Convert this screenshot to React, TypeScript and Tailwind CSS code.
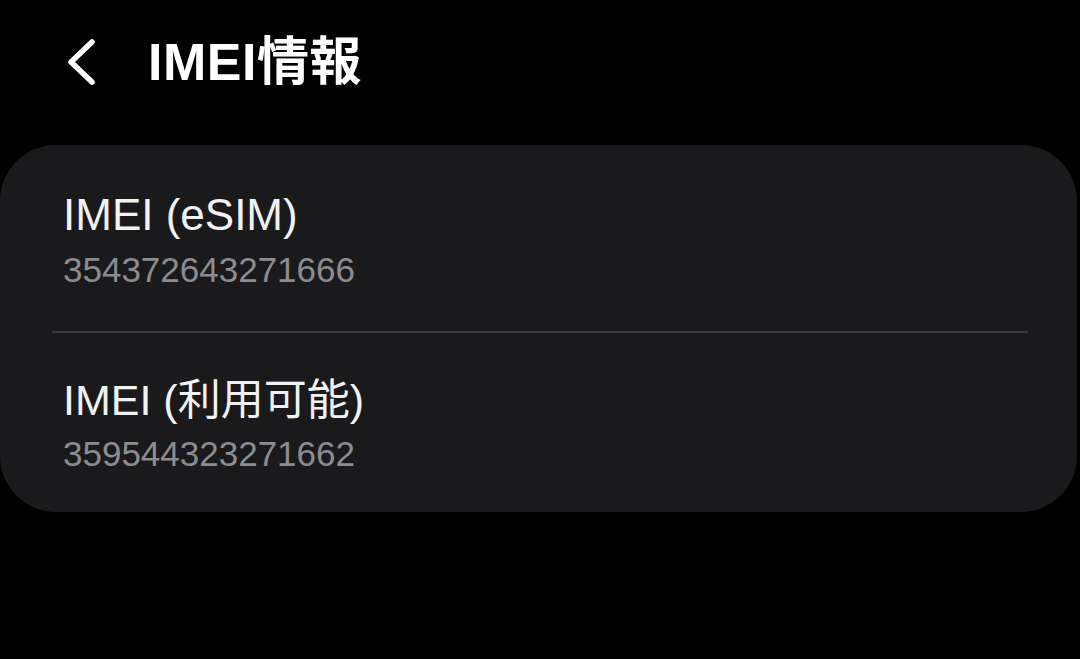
export default function App() {
  return (
    <div
      className="w-[1080px] h-[659px] bg-black text-white overflow-hidden"
      style={{ fontFamily: '"Liberation Sans", "Noto Sans CJK JP", sans-serif' }}
    >
      {/* header */}
      <div className="h-[125px] flex items-center">
        <div className="w-[148px] flex items-center pl-[66px] pb-[2px]">
          <svg width="32" height="50" viewBox="0 0 32 50" fill="none">
            <path d="M26 5 L5 25 L26 45" stroke="#ffffff" strokeWidth="5.5" strokeLinecap="round" strokeLinejoin="round" />
          </svg>
        </div>
        <h1 className="text-[52px] leading-none font-bold tracking-[0.5px] pb-[2px]">IMEI情報</h1>
      </div>

      {/* card */}
      <div className="mt-[20px] w-[1077px] bg-[#1a1a1c] rounded-[56px] flex flex-col">
        <div className="pl-[63px] pt-[45px] pb-[41px] flex flex-col gap-[10px]">
          <div className="text-[44px] leading-[50px] text-[#f2f2f2]">IMEI (eSIM)</div>
          <div className="text-[35px] leading-[40px] text-[#8c8c90]">354372643271666</div>
        </div>
        <div className="ml-[52px] mr-[49px] h-[2px] bg-[#3a3a3c]" />
        <div className="pl-[63px] pt-[42px] pb-[38px] flex flex-col gap-[9px]">
          <div className="text-[43px] leading-[50px] text-[#f2f2f2]">IMEI (利用可能)</div>
          <div className="text-[35px] leading-[40px] text-[#8c8c90]">359544323271662</div>
        </div>
      </div>
    </div>
  );
}
